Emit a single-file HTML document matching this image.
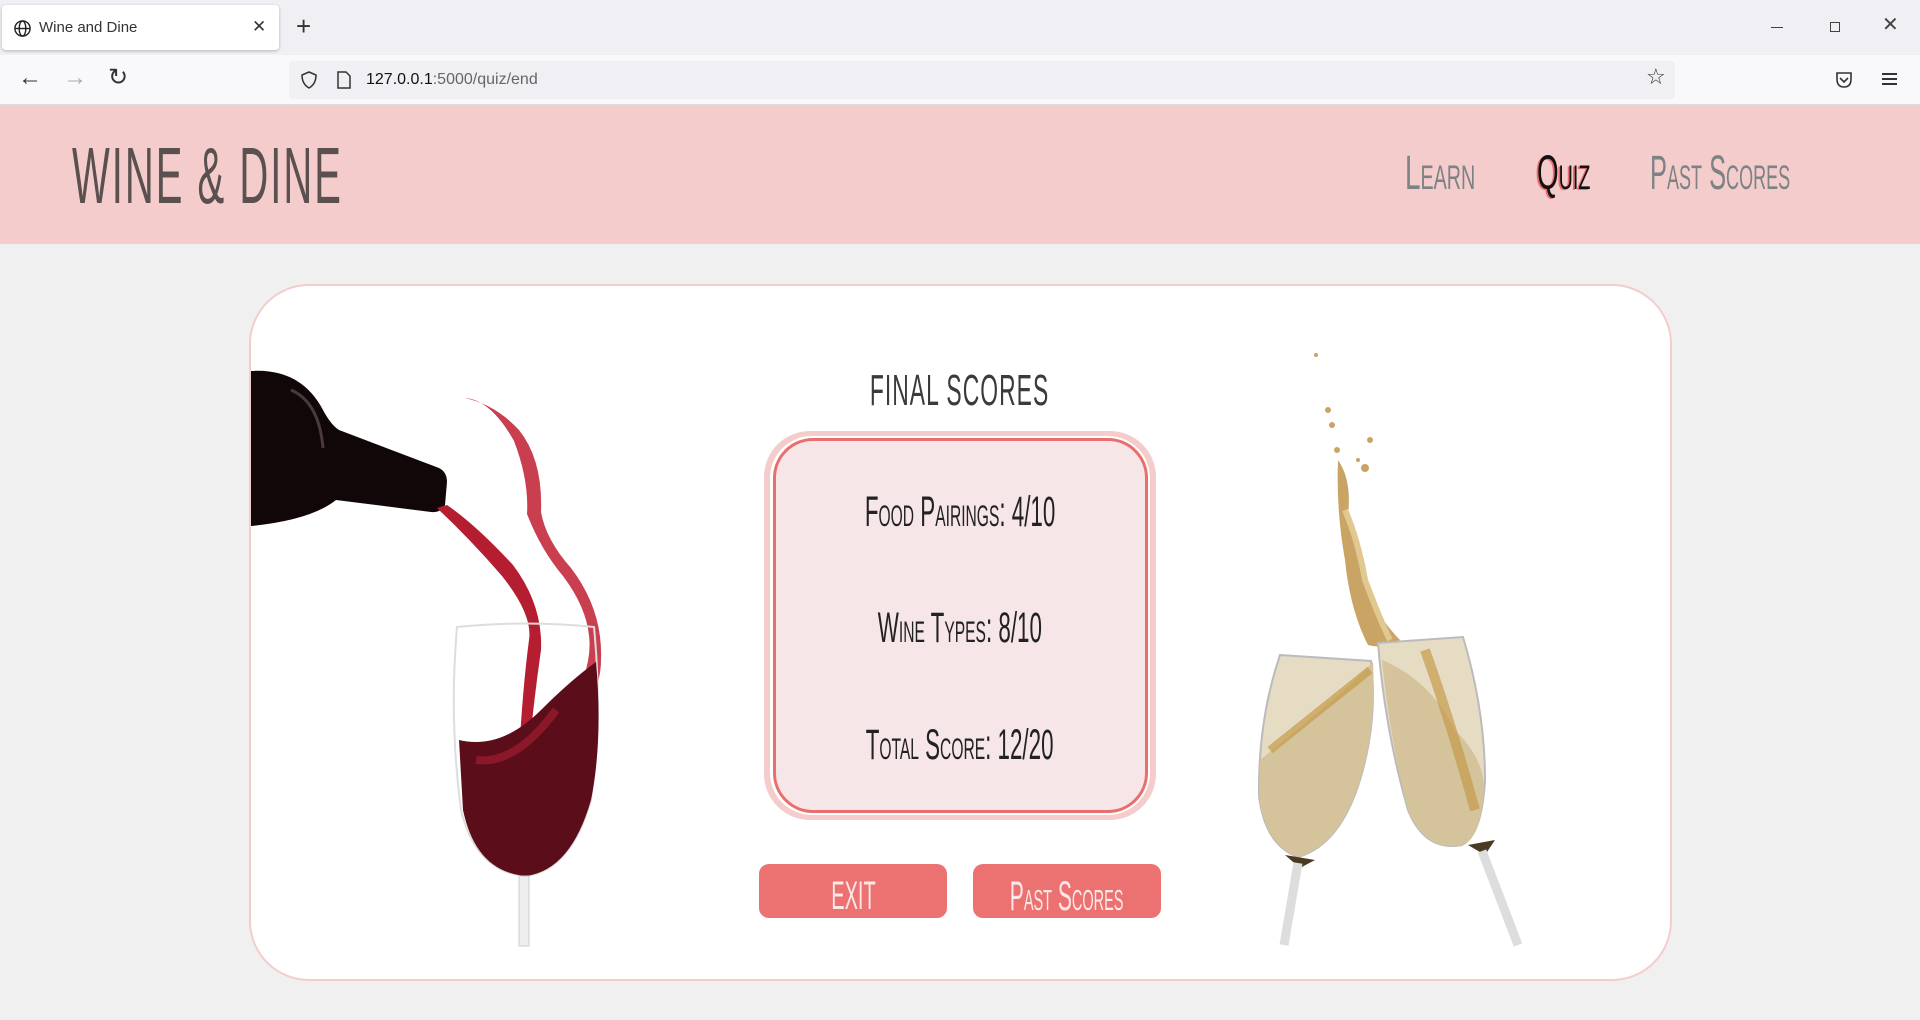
<!DOCTYPE html>
<html><head><meta charset="utf-8"><style>
*{margin:0;padding:0;box-sizing:border-box}
body{width:1920px;height:1020px;background:#f0f0f0;position:relative;overflow:hidden;font-family:"Liberation Sans Narrow","Liberation Sans",sans-serif}
.abs{position:absolute}
.t{position:absolute;white-space:nowrap;transform-origin:0 0;line-height:1}
span{white-space:nowrap}
</style></head><body>
<!-- browser chrome -->
<div class="abs" style="left:0;top:0;width:1920px;height:55px;background:#f0f0f4"></div>
<div class="abs" style="left:2px;top:5px;width:277px;height:45px;background:#fff;border-radius:4px;box-shadow:0 1px 3px rgba(0,0,0,.25)"></div>
<svg class="abs" style="left:13px;top:19px" width="19" height="19" viewBox="0 0 20 20"><g fill="none" stroke="#222" stroke-width="1.5"><circle cx="10" cy="10" r="8"/><ellipse cx="10" cy="10" rx="3.5" ry="8"/><line x1="2" y1="10" x2="18" y2="10"/></g></svg>
<div class="t" style="left:39px;top:20px;font-family:'Liberation Sans',sans-serif;font-size:15px;color:#333">Wine and Dine</div>
<div class="t" style="left:252px;top:18px;font-family:'Liberation Sans',sans-serif;font-size:17px;color:#333">✕</div>
<div class="t" style="left:296px;top:13px;font-family:'Liberation Sans',sans-serif;font-size:26px;color:#333;font-weight:300">+</div>
<div class="abs" style="left:1771px;top:27px;width:12px;height:1px;background:#444"></div>
<div class="abs" style="left:1830px;top:22px;width:10px;height:10px;border:1px solid #444"></div>
<div class="t" style="left:1882px;top:15px;font-family:'Liberation Sans',sans-serif;font-size:20px;color:#444">✕</div>
<div class="abs" style="left:0;top:55px;width:1920px;height:50px;background:#f9f9fb;border-bottom:1px solid #ddd"></div>
<div class="t" style="left:18px;top:66px;font-family:'Liberation Sans',sans-serif;font-size:24px;color:#333">←</div>
<div class="t" style="left:63px;top:66px;font-family:'Liberation Sans',sans-serif;font-size:24px;color:#aaa">→</div>
<div class="t" style="left:108px;top:66px;font-family:'Liberation Sans',sans-serif;font-size:24px;color:#333">↻</div>
<div class="abs" style="left:289px;top:61px;width:1386px;height:38px;background:#f0f0f4;border-radius:4px"></div>
<svg class="abs" style="left:299px;top:70px" width="20" height="20" viewBox="0 0 20 20"><path d="M10 2 L17 5 Q17 14 10 18 Q3 14 3 5 Z" fill="none" stroke="#333" stroke-width="1.5"/></svg>
<svg class="abs" style="left:336px;top:70px" width="16" height="20" viewBox="0 0 16 20"><path d="M2 2 H10 L14 6 V18 H2 Z" fill="none" stroke="#333" stroke-width="1.5"/></svg>
<div class="t" style="left:366px;top:72px;font-family:'Liberation Sans',sans-serif;font-size:16px;color:#111">127.0.0.1<span style="color:#666">:5000/quiz/end</span></div>
<div class="t" style="left:1646px;top:67px;font-family:'DejaVu Sans',sans-serif;font-size:22px;color:#333">☆</div>
<svg class="abs" style="left:1834px;top:70px" width="20" height="20" viewBox="0 0 20 20"><path d="M3 3 H17 V9 Q17 17 10 17 Q3 17 3 9 Z M6 8 L10 12 L14 8" fill="none" stroke="#333" stroke-width="1.6"/></svg>
<div class="abs" style="left:1882px;top:73px;width:15px;height:2px;background:#333;box-shadow:0 5px 0 #333,0 10px 0 #333"></div>

<!-- header -->
<div class="abs" style="left:0;top:105px;width:1920px;height:139px;background:#f4cccc"></div>
<div class="t" style="left:72px;top:136px;font-size:80px;color:#5b5050;transform:scaleX(.5);letter-spacing:4px">WINE &amp; DINE</div>
<div class="t" style="left:1405px;top:150px;font-size:48px;color:#7d8285;font-variant:small-caps;transform:scaleX(.58)">Learn</div>
<div class="t" style="left:1537px;top:150px;font-size:48px;color:#111;font-variant:small-caps;transform:scaleX(.58);text-shadow:-3px 1px 0 #ec6f6f">Quiz</div>
<div class="t" style="left:1650px;top:150px;font-size:48px;color:#7d8285;font-variant:small-caps;transform:scaleX(.53)">Past Scores</div>

<!-- card -->
<div class="abs" style="left:249px;top:284px;width:1423px;height:697px;background:#fff;border:2px solid #f4cccc;border-radius:60px"></div>

<!-- left image -->
<svg class="abs" style="left:251px;top:340px" width="360" height="620" viewBox="0 0 360 620">
<path d="M0 31 Q50 28 72 70 Q80 85 88 90 L188 128 Q196 132 196 142 L194 165 Q190 173 180 172 L85 160 Q60 180 0 186 Z" fill="#120708"/>
<path d="M40 50 Q68 62 72 108" stroke="#4a3a3a" stroke-width="3" fill="none"/>
<path d="M186 168 Q220 200 251 236 Q282 275 278 300 Q270 360 266 456 L274 456 Q280 380 290 310 Q292 265 262 225 Q225 185 196 165 Z" fill="#b51d30"/>
<path d="M214 58 Q240 60 263 101 Q278 140 276 174 Q290 210 312 236 Q345 280 337 321 Q330 360 294 395 L310 398 Q350 360 350 320 Q352 270 320 228 Q295 200 290 172 Q292 120 268 90 Q245 65 214 58 Z" fill="#c42a3c" opacity=".9"/>
<path d="M206 287 Q275 280 343 287 Q352 380 340 460 Q320 530 275 536 Q225 532 210 470 Q198 380 206 287 Z" fill="none" stroke="#ddd" stroke-width="2"/>
<path d="M208 400 Q250 410 290 370 Q320 340 345 322 Q352 400 340 460 Q320 530 275 536 Q225 532 212 470 Z" fill="#5b0d19"/>
<path d="M225 420 Q265 425 305 370" stroke="#8b1828" stroke-width="8" fill="none"/>
<rect x="268" y="536" width="10" height="70" fill="#eee" stroke="#ccc"/>
</svg>

<!-- right image -->
<svg class="abs" style="left:1240px;top:340px" width="300" height="620" viewBox="0 0 300 620">
<g fill="#c9a465">
<circle cx="76" cy="15" r="2"/><circle cx="88" cy="70" r="3"/><circle cx="92" cy="85" r="3"/><circle cx="97" cy="110" r="3"/><circle cx="130" cy="100" r="3"/><circle cx="125" cy="128" r="4"/><circle cx="118" cy="120" r="2"/>
<path d="M98 120 Q112 140 108 175 Q115 210 119 223 Q130 270 160 300 Q145 310 128 305 Q110 270 105 220 Q96 170 98 120 Z"/>
<path d="M105 170 Q118 200 125 240 Q140 280 150 300" stroke="#e0c890" stroke-width="6" fill="none"/>
</g>
<path d="M40 315 L131 321 Q138 380 120 440 Q100 505 58 517 Q25 505 19 456 Q18 380 40 315 Z" fill="#e6dcc4" stroke="#bbb" stroke-width="2"/>
<path d="M20 420 Q70 380 110 345 Q125 330 133 322 Q136 390 120 440 Q100 505 58 517 Q25 505 19 456 Z" fill="#d4c39b"/>
<path d="M138 303 L223 297 Q245 370 245 440 Q242 495 222 505 Q185 512 168 470 Q145 390 138 303 Z" fill="#e6dcc4" stroke="#bbb" stroke-width="2"/>
<path d="M142 320 Q190 340 215 390 Q245 420 244 450 Q240 500 222 505 Q185 512 168 470 Q150 400 142 320 Z" fill="#d4c39b"/>
<path d="M185 310 Q210 380 235 470" stroke="#c49a4a" stroke-width="10" fill="none" opacity=".7"/>
<path d="M30 410 Q80 370 130 330" stroke="#c49a4a" stroke-width="8" fill="none" opacity=".7"/>
<path d="M45 515 L75 520 L60 528 Z" fill="#4a3a22"/>
<path d="M228 505 L255 500 L245 515 Z" fill="#4a3a22"/>
<path d="M58 523 L44 605" stroke="#ddd" stroke-width="9"/>
<path d="M242 511 L278 605" stroke="#ddd" stroke-width="9"/>
</svg>

<!-- center -->
<div class="abs" style="left:750px;top:366px;width:420px;text-align:center"><span style="display:inline-block;font-size:44px;color:#3c3a3c;transform:scaleX(.52);letter-spacing:2px">FINAL SCORES</span></div>
<div class="abs" style="left:764px;top:431px;width:392px;height:389px;background:#f4cccc;border-radius:46px"></div>
<div class="abs" style="left:770px;top:436px;width:380px;height:379px;background:#fff;border-radius:42px"></div>
<div class="abs" style="left:773px;top:438px;width:375px;height:375px;background:#f7e6e7;border:3px solid #ea6e6e;border-radius:40px"></div>
<div class="abs" style="left:710px;top:488px;width:500px;text-align:center"><span style="display:inline-block;font-size:43px;color:#222;font-variant:small-caps;transform:scaleX(.52)">Food Pairings: 4/10</span></div>
<div class="abs" style="left:710px;top:604px;width:500px;text-align:center"><span style="display:inline-block;font-size:43px;color:#222;font-variant:small-caps;transform:scaleX(.52)">Wine Types: 8/10</span></div>
<div class="abs" style="left:710px;top:721px;width:500px;text-align:center"><span style="display:inline-block;font-size:43px;color:#222;font-variant:small-caps;transform:scaleX(.52)">Total Score: 12/20</span></div>
<div class="abs" style="left:759px;top:864px;width:188px;height:54px;background:#ec7272;border-radius:10px;text-align:center;padding-top:10px;white-space:nowrap"><span style="display:inline-block;font-size:40px;color:#fce8e8;transform:scaleX(.5)">EXIT</span></div>
<div class="abs" style="left:973px;top:864px;width:188px;height:54px;background:#ec7272;border-radius:10px;text-align:center;padding-top:8px;white-space:nowrap;overflow:visible"><span style="display:inline-block;font-size:42px;color:#fce8e8;font-variant:small-caps;transform:scaleX(.5);margin:0 -100px">Past Scores</span></div>
</body></html>
